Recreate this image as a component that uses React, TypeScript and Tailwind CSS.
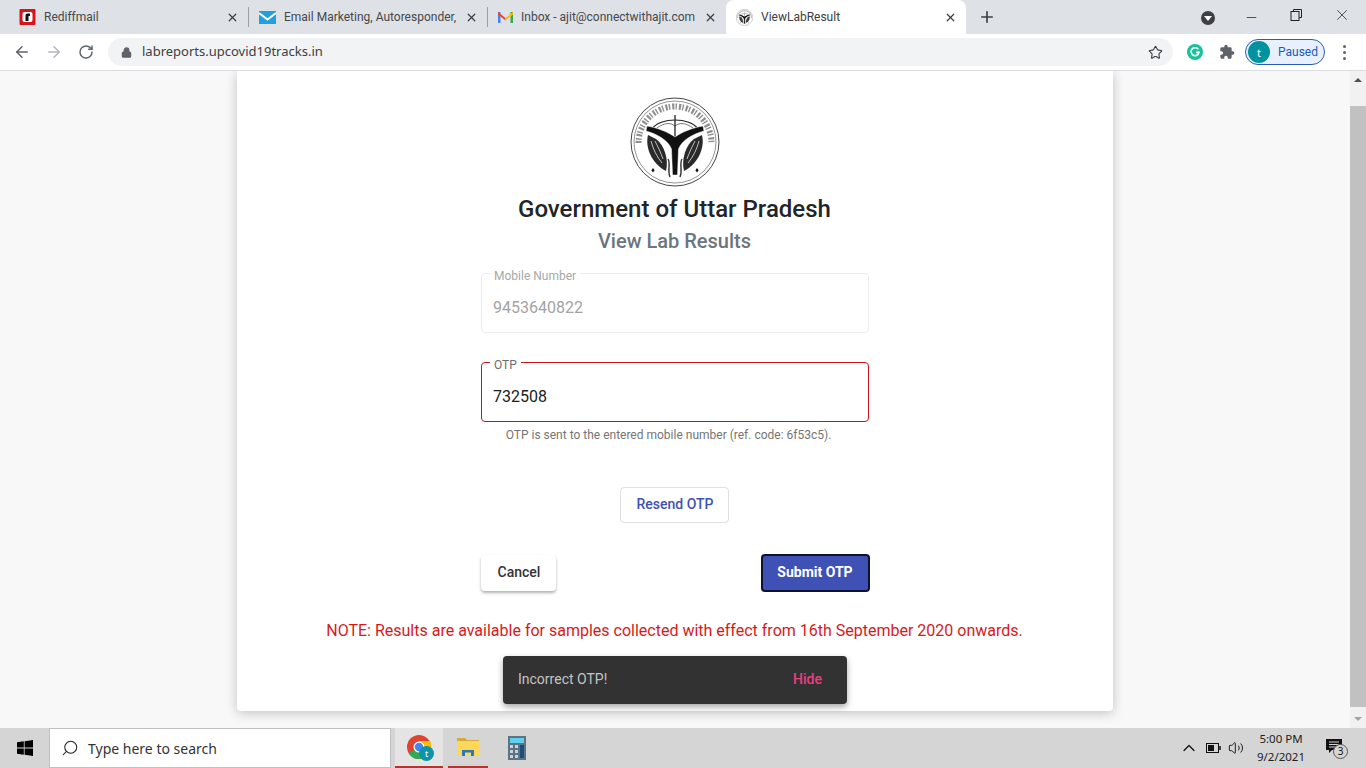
import React from "react";
import { ArrowLeft, ArrowRight, RotateCw, Lock, Star, Plus, X, Minus, Search, ChevronUp, Volume2 } from "lucide-react";

const ui = "font-['Noto_Sans',sans-serif]";
const roboto = "font-['Roboto',sans-serif]";

function Seal({ size }: { size: number }) {
  return (
    <svg width={size} height={size} viewBox="0 0 90 90" className="shrink-0">
      <circle cx="45" cy="45" r="44" fill="#fff" stroke="#444" strokeWidth="1" />
      <circle cx="45" cy="45" r="41" fill="none" stroke="#666" strokeWidth="0.7" />
      {/* inscription band */}
      <path d="M8.5 46 A36.5 36.5 0 0 1 81.5 46" fill="none" stroke="#444" strokeWidth="6" strokeDasharray="2.2 1.2 1.4 2" opacity="0.6" />
      {/* bow and arrow */}
      <path d="M22 32 C30 20 60 20 68 32" fill="none" stroke="#222" strokeWidth="1.2" />
      <path d="M27 31 C34 26 40 25 45 29 C50 25 56 26 63 31" fill="#fff" stroke="#555" strokeWidth="0.8" />
      <path d="M45 18 V40" stroke="#222" strokeWidth="1.3" />
      {/* fish */}
      <path d="M18 38 C15 50 21 66 36 74 C39 62 34 48 26 42 Z" fill="#2a2a2a" />
      <path d="M72 38 C75 50 69 66 54 74 C51 62 56 48 64 42 Z" fill="#2a2a2a" />
      <path d="M21 44 C23 52 27 60 32 66 M25 44 C28 50 31 56 33 62 M69 44 C67 52 63 60 58 66 M65 44 C62 50 59 56 57 62" stroke="#e5e5e5" strokeWidth="0.8" fill="none" />
      {/* water */}
      <path d="M38 62 C41 67 37 73 40 80 M52 62 C49 67 53 73 50 80" stroke="#333" strokeWidth="1.4" fill="none" />
      {/* the heavy Y */}
      <path d="M17 29 C28 31 38 35 45 40 C52 35 62 31 73 29 L74 34 C63 37 52 43 48.5 52 L47.5 78 L42.5 78 L41.5 52 C38 43 27 37 16 34 Z" fill="#111" stroke="#fff" strokeWidth="0.5" />
      {/* stars */}
      <path d="M23 71 l1.6 2.2 -1.6 2.2 -1.6 -2.2 Z M67 71 l1.6 2.2 -1.6 2.2 -1.6 -2.2 Z" fill="#111" />
    </svg>
  );
}

function RediffIcon() {
  return (
    <svg width="17" height="16" viewBox="0 0 16 16" className="shrink-0">
      <rect width="16" height="16" rx="1" fill="#d8141c" />
      <rect x="3" y="3" width="10" height="10" rx="2" fill="#fff" />
      <path d="M6 12 V6 Q6 4.5 8 4.5 H10.5 V7 H9 V12 Z" fill="#111" />
    </svg>
  );
}

function MailIcon() {
  return (
    <svg width="17" height="13" viewBox="0 0 17 13" className="shrink-0">
      <rect width="17" height="13" fill="#20a0dc" />
      <path d="M0 2 L8.5 8.5 L17 2" fill="none" stroke="#fff" strokeWidth="2" />
    </svg>
  );
}

function GmailIcon() {
  return (
    <svg width="15" height="12" viewBox="0 0 15 12" className="shrink-0">
      <path d="M0 12 V1 L2.5 1 V12 Z" fill="#4285f4" />
      <path d="M12.5 12 V1 L15 1 V12 Z" fill="#34a853" />
      <path d="M0 1 L7.5 7 L7.5 9.5 L0 3.5 Z" fill="#ea4335" />
      <path d="M15 1 L7.5 7 L7.5 9.5 L15 3.5 Z" fill="#fbbc05" />
    </svg>
  );
}

function Tab({ icon, title, width, active }: { icon: React.ReactNode; title: string; width: string; active?: boolean }) {
  return (
    <div className={`${width} h-full flex items-center pl-[10px] pr-[9px] gap-[8px] shrink-0 ${active ? "bg-white rounded-t-[8px]" : ""}`}>
      {icon}
      <span className={`flex-1 min-w-0 whitespace-nowrap text-[12px] ${roboto} ${active ? "text-[#3c4043]" : "text-[#45484c]"}`}>{title}</span>
      <X size={13} strokeWidth={2.4} className="text-[#3c4043] shrink-0" />
    </div>
  );
}

function TabStrip() {
  return (
    <div className={`${ui} h-[34px] bg-[#dee1e6] flex items-end pl-[9px] shrink-0`}>
      <div className="flex h-[34px] items-center">
        <Tab icon={<RediffIcon />} title="Rediffmail" width="w-[239px]" />
        <div className="w-px h-[20px] bg-[#9aa0a6]" />
        <Tab icon={<MailIcon />} title="Email Marketing, Autoresponder," width="w-[238px]" />
        <div className="w-px h-[20px] bg-[#9aa0a6]" />
        <Tab icon={<GmailIcon />} title="Inbox - ajit@connectwithajit.com" width="w-[238px]" />
        <Tab icon={<Seal size={17} />} title="ViewLabResult" width="w-[240px]" active />
        <Plus size={18} strokeWidth={2.2} className="text-[#3c4043] ml-[12px]" />
      </div>
      <div className="flex-1" />
      <div className="flex h-[34px] items-center text-[#222]">
        <div className="w-[14px] h-[14px] rounded-full bg-[#3c4043] flex items-center justify-center mt-[2px]">
          <div className="w-0 h-0 border-l-[4px] border-r-[4px] border-t-[5px] border-l-transparent border-r-transparent border-t-white" />
        </div>
        <Minus size={15} strokeWidth={1.2} className="ml-[29px]" />
        <svg width="12" height="12" viewBox="0 0 12 12" className="ml-[31px] -mt-[4px]" fill="none" stroke="#222">
          <path d="M3.5 2.5 V0.5 H11.5 V8.5 H9" />
          <rect x="1" y="2.5" width="8" height="9" />
        </svg>
        <X size={18} strokeWidth={1} className="ml-[31px] mr-[15px] -mt-[4px]" />
      </div>
    </div>
  );
}

function Toolbar() {
  return (
    <div className={`${ui} h-[37px] bg-white border-b border-[#dadce0] flex items-center shrink-0`}>
      <ArrowLeft size={18} strokeWidth={2} className="ml-[13px] text-[#5f6368]" />
      <ArrowRight size={18} strokeWidth={2} className="ml-[14px] text-[#b4b7bb]" />
      <RotateCw size={16} strokeWidth={2.2} className="ml-[15px] text-[#5f6368]" />
      <div className="ml-[14px] w-[1065px] h-[28px] rounded-full bg-[#f1f3f4] flex items-center pl-[13px] pr-[10px]">
        <Lock size={11} strokeWidth={2.6} fill="#5f6368" className="text-[#5f6368]" />
        <span className="ml-[10px] text-[13px] text-[#3c4043] flex-1">labreports.upcovid19tracks.in</span>
        <Star size={15} strokeWidth={1.8} className="text-[#3c4043]" />
      </div>
      <div className="ml-[14px] w-[16px] h-[16px] rounded-full bg-[#15c39a] flex items-center justify-center">
        <svg width="10" height="10" viewBox="0 0 10 10" fill="none" stroke="#fff" strokeWidth="1.6">
          <path d="M8.4 2.4 A4 4 0 1 0 9 5.4 H6" />
        </svg>
      </div>
      <svg width="16" height="16" viewBox="0 0 24 24" className="ml-[16px]" fill="#5f6368">
        <path d="M20.5 11H19V7a2 2 0 0 0-2-2h-4V3.5a2.5 2.5 0 0 0-5 0V5H4a2 2 0 0 0-2 2v3.8h1.5a2.7 2.7 0 0 1 0 5.4H2V20a2 2 0 0 0 2 2h3.8v-1.5a2.7 2.7 0 0 1 5.4 0V22H17a2 2 0 0 0 2-2v-4h1.5a2.5 2.5 0 0 0 0-5z" />
      </svg>
      <div className="ml-[10px] w-[80px] h-[26px] rounded-full bg-[#e8f0fe] border border-[#2a5db0] flex items-center pl-[2px]">
        <div className="w-[22px] h-[22px] rounded-full bg-[#00939f] flex items-center justify-center text-white text-[11px] leading-none">t</div>
        <span className={`ml-[8px] text-[12px] text-[#1a5bb8] ${roboto}`}>Paused</span>
      </div>
      <div className="ml-[18px] flex flex-col gap-[3px]">
        <div className="w-[3px] h-[3px] rounded-full bg-[#5f6368]" />
        <div className="w-[3px] h-[3px] rounded-full bg-[#5f6368]" />
        <div className="w-[3px] h-[3px] rounded-full bg-[#5f6368]" />
      </div>
    </div>
  );
}

function OutlinedField({ label, value, error }: { label: string; value: string; error?: boolean }) {
  return (
    <fieldset className={`w-[388px] h-[67px] rounded-[4px] border px-[7px] ${error ? "border-[#c5161d]" : "border-[#ececec]"}`}>
      <legend className={`px-[4px] ml-px text-[12px] leading-[14px] translate-y-[3px] ${error ? "text-[#6b6b6b]" : "text-[#a8a8a8]"}`}>{label}</legend>
      <div className={`pl-[4px] pt-[16px] text-[16px] leading-[24px] ${error ? "text-[#212121]" : "text-[#a3a3a3]"}`}>{value}</div>
    </fieldset>
  );
}

function LabCard() {
  return (
    <div className={`${roboto} relative w-[876px] h-[640px] bg-white rounded-b-[4px] shadow-[0_2px_12px_rgba(0,0,0,0.22)] flex flex-col items-center pt-[26px]`}>
      <Seal size={90} />
      <h1 className="mt-[6px] mr-px text-[24px] leading-[32px] font-medium text-[#212529]">Government of Uttar Pradesh</h1>
      <h2 className="mt-[2px] mr-px text-[20px] leading-[28px] font-medium text-[#6c757d]">View Lab Results</h2>

      <div className="mt-[11px]"><OutlinedField label="Mobile Number" value="9453640822" /></div>
      <div className="mt-[22px]"><OutlinedField label="OTP" value="732508" error /></div>
      <p className="mt-[6px] mr-[13px] text-[12px] leading-[14px] text-[#757575]">OTP is sent to the entered mobile number (ref. code: 6f53c5).</p>

      <button type="button" className="mt-[45px] mr-[2px] w-[109px] h-[36px] pb-[2px] pl-[2px] rounded-[4px] border border-[#e0e0e0] bg-white text-[14px] font-medium text-[#3f51b5]">
        Resend OTP
      </button>

      <div className="mt-[31px] w-[389px] flex items-center justify-between">
        <button type="button" className="w-[75px] h-[36px] pb-[2px] pl-[2px] rounded-[4px] bg-white text-[14px] font-medium text-[#333] shadow-[0_2px_3px_rgba(0,0,0,0.3)]">
          Cancel
        </button>
        <button type="button" className="w-[109px] h-[38px] pb-[2px] rounded-[4px] bg-[#3f51b5] border-2 border-[#0d1230] text-[14px] font-bold text-white">
          Submit OTP
        </button>
      </div>

      <p className="mt-[27px] mr-px text-[16px] leading-[24px] text-[#d8191c]">
        NOTE: Results are available for samples collected with effect from 16th September 2020 onwards.
      </p>

      {/* snackbar sits over the card */}
      <div className="absolute left-[266px] top-[585px] w-[344px] h-[48px] rounded-[4px] bg-[#323232] shadow-[0_3px_6px_rgba(0,0,0,0.35)] flex items-center justify-between pl-[15px] pr-[25px] pb-[2px]">
        <span className="text-[14px] text-[#c4c4c4]">Incorrect OTP!</span>
        <span className="text-[14px] font-medium text-[#ea4080]">Hide</span>
      </div>
    </div>
  );
}

function Scrollbar() {
  return (
    <div className="w-[16px] bg-[#f1f1f1] flex flex-col items-center justify-between shrink-0">
      <div className="w-full flex flex-col items-center">
        <div className="h-[18px] flex items-center justify-center">
          <div className="w-0 h-0 border-l-[4px] border-r-[4px] border-b-[4px] border-l-transparent border-r-transparent border-b-[#505050]" />
        </div>
        <div className="w-full h-[601px] mt-[17px] bg-[#c1c1c1]" />
      </div>
      <div className="h-[18px] flex items-center justify-center">
        <div className="w-0 h-0 border-l-[4px] border-r-[4px] border-t-[4px] border-l-transparent border-r-transparent border-t-[#a3a3a3]" />
      </div>
    </div>
  );
}

function Taskbar() {
  return (
    <div className={`${ui} h-[40px] bg-[#d5d5d5] flex items-stretch shrink-0`}>
      <div className="w-[49px] flex items-center justify-center">
        <svg width="16" height="16" viewBox="0 0 16 16" fill="#000">
          <path d="M0 2.3 L6.8 1.3 V7.6 H0 Z M7.6 1.2 L16 0 V7.6 H7.6 Z M0 8.4 H6.8 V14.7 L0 13.7 Z M7.6 8.4 H16 V16 L7.6 14.8 Z" />
        </svg>
      </div>
      <div className="w-[342px] bg-white border border-[#c0c0c0] flex items-center pl-[11px]">
        <Search size={18} strokeWidth={1.4} className="text-[#222] -scale-x-100" />
        <span className="ml-[9px] text-[14px] text-[#333]">Type here to search</span>
      </div>
      <div className="relative ml-[4px] w-[48px] bg-[#e4e4e4] border-b-[2px] border-[#b8332c] flex items-center justify-center">
        <svg width="24" height="24" viewBox="0 0 24 24">
          <circle cx="12" cy="12" r="12" fill="#e0432f" />
          <path d="M12 12 L1.6 18 A12 12 0 0 0 14 23.8 Z" fill="#33a852" />
          <path d="M12 6 H23 A12 12 0 0 1 14 23.8 Z" fill="#fbbc05" />
          <circle cx="12" cy="12" r="5.5" fill="#fff" />
          <circle cx="12" cy="12" r="4.2" fill="#4285f4" />
        </svg>
        <div className="absolute left-[24px] top-[18px] w-[15px] h-[15px] rounded-full bg-[#0e94a8] text-white text-[9px] leading-[15px] text-center">t</div>
      </div>
      <div className="ml-[5px] w-[40px] border-b-[2px] border-[#b8332c] flex items-center justify-center">
        <svg width="22" height="20" viewBox="0 0 22 20">
          <path d="M0 1 H8 L10 3 H22 V17 H0 Z" fill="#d8a93a" />
          <rect y="4" width="22" height="14" fill="#fbd75b" />
          <path d="M5 13 H17 V19 H14 V15.5 H8 V19 H5 Z" fill="#2e76b5" />
        </svg>
      </div>
      <div className="ml-[9px] w-[40px] flex items-center justify-center">
        <svg width="18" height="24" viewBox="0 0 18 24">
          <rect width="18" height="24" fill="#5d7384" />
          <rect x="2" y="2" width="14" height="5" fill="#5fd0ee" />
          <path d="M2 9 h3 v3 h-3 Z M7 9 h3 v3 h-3 Z M2 14 h3 v3 h-3 Z M7 14 h3 v3 h-3 Z M2 19 h3 v3 h-3 Z M7 19 h3 v3 h-3 Z" fill="#c8d2da" />
          <rect x="12" y="9" width="4" height="13" fill="#1b4f7a" />
        </svg>
      </div>
      <div className="flex-1" />
      <div className="flex items-center text-[#111]">
        <ChevronUp size={20} strokeWidth={1.5} />
        <svg width="15" height="10" viewBox="0 0 15 10" className="ml-[7px]" fill="none" stroke="#111">
          <rect x="0.5" y="0.5" width="12" height="9" />
          <rect x="2" y="2" width="6" height="6" fill="#111" stroke="none" />
          <path d="M14 3 V7" strokeWidth="1.5" />
        </svg>
        <Volume2 size={16} strokeWidth={1.4} className="ml-[7px]" />
        <div className="ml-[7px] w-[60px] text-center text-[11.5px] leading-[18px] text-[#222]">
          <div>5:00 PM</div>
          <div>9/2/2021</div>
        </div>
        <div className="relative ml-[15px] mr-[18px] w-[22px] h-[20px]">
          <svg width="16" height="16" viewBox="0 0 16 16" fill="#111">
            <path d="M0 1 H16 V12 H6 L3 15 V12 H0 Z" />
            <path d="M3 4 H13 M3 6.5 H13 M3 9 H10" stroke="#d5d5d5" strokeWidth="1" />
          </svg>
          <div className="absolute left-[7px] top-[6px] w-[15px] h-[15px] rounded-full bg-[#d5d5d5] border border-[#555] text-[10px] leading-[13px] text-center">3</div>
        </div>
      </div>
    </div>
  );
}

export default function App() {
  return (
    <div className="w-[1366px] h-[768px] overflow-hidden flex flex-col bg-[#f8f8f8]">
      <TabStrip />
      <Toolbar />
      <div className="flex-1 min-h-0 flex">
        <div className="flex-1 flex justify-center overflow-hidden">
          <div className="h-[641px]">
            <LabCard />
          </div>
        </div>
        <Scrollbar />
      </div>
      <Taskbar />
    </div>
  );
}
